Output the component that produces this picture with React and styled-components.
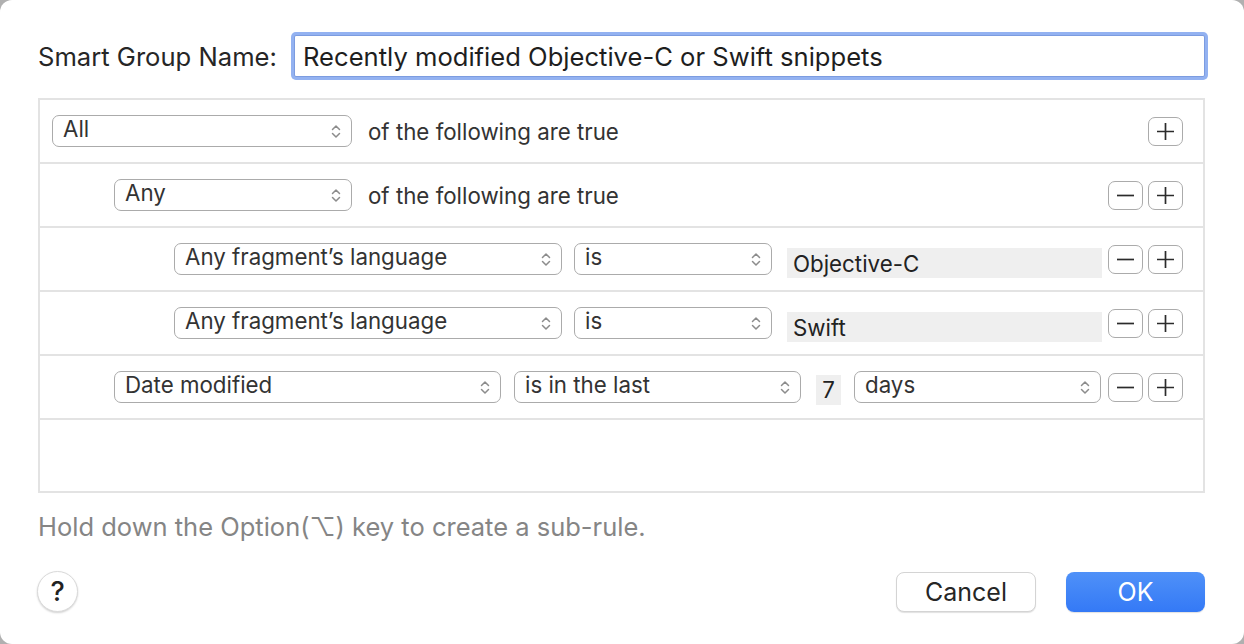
import React from 'react'
import styled, { createGlobalStyle } from 'styled-components'

const GlobalStyle = createGlobalStyle`
  html, body {
    margin: 0;
    padding: 0;
    background: #b0b0b0;
  }
  body {
    font-family: Inter, "Liberation Sans", "DejaVu Sans", sans-serif;
    -webkit-font-smoothing: antialiased;
  }
`

const Chevrons = () => (
  <svg width="10" height="17" viewBox="0 0 10 17" fill="none">
    <path d="M1.5 6.5 L5 3 L8.5 6.5" stroke="#8c8c8c" strokeWidth="1.5" strokeLinecap="round" strokeLinejoin="round" />
    <path d="M1.5 10.5 L5 14 L8.5 10.5" stroke="#8c8c8c" strokeWidth="1.5" strokeLinecap="round" strokeLinejoin="round" />
  </svg>
)

const PlusIcon = () => (
  <svg width="19" height="19" viewBox="0 0 19 19">
    <path d="M9.5 1 V18 M1 9.5 H18" stroke="#2b2b2b" strokeWidth="1.7" />
  </svg>
)

const MinusIcon = () => (
  <svg width="19" height="19" viewBox="0 0 19 19">
    <path d="M1 9.5 H18" stroke="#2b2b2b" strokeWidth="1.7" />
  </svg>
)

function PopUp({ w, gap, children }) {
  return (
    <Popup w={w} gap={gap}>
      <span>{children}</span>
      <Chevrons />
    </Popup>
  )
}

function Steppers({ minus = true }) {
  return (
    <StepGroup>
      {minus && <StepButton><MinusIcon /></StepButton>}
      <StepButton><PlusIcon /></StepButton>
    </StepGroup>
  )
}

export default function App() {
  return (
    <>
      <GlobalStyle />
      <Sheet>
        <NameRow>
          <NameLabel>Smart Group Name:</NameLabel>
          <NameInput>Recently modified Objective-C or Swift snippets</NameInput>
        </NameRow>

        <Rules>
          <Row indent={12}>
            <PopUp w={300} gap={16}>All</PopUp>
            <RuleText>of the following are true</RuleText>
            <Steppers minus={false} />
          </Row>
          <Row indent={74}>
            <PopUp w={238} gap={16}>Any</PopUp>
            <RuleText>of the following are true</RuleText>
            <Steppers />
          </Row>
          <Row indent={134}>
            <PopUp w={388}>Any fragment’s language</PopUp>
            <PopUp w={198} gap={15}>is</PopUp>
            <ValueField w={315} drop={8}>Objective-C</ValueField>
            <Steppers />
          </Row>
          <Row indent={134}>
            <PopUp w={388}>Any fragment’s language</PopUp>
            <PopUp w={198} gap={15}>is</PopUp>
            <ValueField w={315} drop={8}>Swift</ValueField>
            <Steppers />
          </Row>
          <Row indent={74}>
            <PopUp w={387} gap={13}>Date modified</PopUp>
            <PopUp w={287} gap={15}>is in the last</PopUp>
            <ValueField w={25} drop={5} center gap={13}>7</ValueField>
            <PopUp w={247} gap={0}>days</PopUp>
            <Steppers />
          </Row>
          <EmptyRow />
        </Rules>

        <Hint>Hold down the Option(⌥) key to create a sub-rule.</Hint>

        <Footer>
          <HelpButton>?</HelpButton>
          <CancelButton>Cancel</CancelButton>
          <OkButton>OK</OkButton>
        </Footer>
      </Sheet>
    </>
  )
}

const Sheet = styled.div`
  width: 1244px;
  height: 644px;
  box-sizing: border-box;
  background: #ffffff;
  border-radius: 12px;
  padding: 35px 39px 0 38px;
  display: flex;
  flex-direction: column;
`

const NameRow = styled.div`
  display: flex;
  align-items: center;
  height: 42px;
`

const NameLabel = styled.label`
  width: 256px;
  flex-shrink: 0;
  font-size: 25.6px;
  color: #262626;
`

const NameInput = styled.div`
  flex: 1;
  height: 42px;
  box-sizing: border-box;
  border: 1px solid #7c9ce0;
  box-shadow: 0 0 0 3px #93b2f1;
  border-radius: 2px;
  background: #fff;
  padding-left: 8px;
  display: flex;
  align-items: center;
  font-size: 25.6px;
  color: #1e1e1e;
`

const Rules = styled.div`
  margin-top: 21px;
  height: 395px;
  box-sizing: border-box;
  border: 2px solid #e3e3e3;
  display: flex;
  flex-direction: column;
`

const Row = styled.div`
  height: 62px;
  flex-shrink: 0;
  border-bottom: 2px solid #e3e3e3;
  display: flex;
  align-items: center;
  padding-left: ${p => p.indent}px;
  padding-right: 20px;
`

const EmptyRow = styled.div`
  flex: 1;
`

const Popup = styled.div`
  width: ${p => p.w}px;
  height: 32px;
  flex-shrink: 0;
  box-sizing: border-box;
  border: 1.5px solid #ababab;
  border-radius: 7px;
  background: #fff;
  display: flex;
  align-items: center;
  justify-content: space-between;
  padding: 0 10px 0 10px;
  margin-right: ${p => (p.gap ?? 12)}px;
  font-size: 22.3px;
  color: #333;
  line-height: 1;

  > span {
    margin-top: -3px;
  }
`

const RuleText = styled.span`
  font-size: 22.3px;
  color: #333;
`

const ValueField = styled.div`
  width: ${p => p.w}px;
  height: 30px;
  flex-shrink: 0;
  box-sizing: border-box;
  background: #efefef;
  margin-top: ${p => p.drop}px;
  margin-right: ${p => p.gap ?? 0}px;
  padding-left: ${p => (p.center ? 0 : 6)}px;
  display: flex;
  align-items: center;
  justify-content: ${p => (p.center ? 'center' : 'flex-start')};
  font-size: 22.3px;
  color: #222;
`

const StepGroup = styled.div`
  margin-left: auto;
  display: flex;
  gap: 5px;
`

const StepButton = styled.div`
  width: 35px;
  height: 29px;
  box-sizing: border-box;
  border: 1.5px solid #ababab;
  border-radius: 7px;
  background: #fff;
  display: flex;
  align-items: center;
  justify-content: center;
`

const Hint = styled.div`
  margin-top: 18px;
  font-size: 25.5px;
  line-height: 31px;
  color: #858585;
`

const Footer = styled.div`
  margin-top: 29px;
  display: flex;
  align-items: center;
`

const HelpButton = styled.div`
  width: 41px;
  height: 41px;
  margin-left: -1px;
  box-sizing: border-box;
  border-radius: 50%;
  border: 1px solid #dadada;
  box-shadow: 0 1px 2px rgba(0, 0, 0, 0.18);
  background: #fff;
  display: flex;
  align-items: center;
  justify-content: center;
  font-size: 27px;
  font-weight: 500;
  color: #222;
`

const CancelButton = styled.div`
  margin-left: auto;
  margin-right: 30px;
  width: 140px;
  height: 40px;
  box-sizing: border-box;
  border-radius: 8px;
  border: 1px solid #d4d4d4;
  box-shadow: 0 1px 1px rgba(0, 0, 0, 0.12);
  background: #fff;
  display: flex;
  align-items: center;
  justify-content: center;
  font-size: 25px;
  color: #262626;
`

const OkButton = styled.div`
  width: 139px;
  height: 40px;
  border-radius: 8px;
  background: linear-gradient(#4f91f8, #3479f6);
  box-shadow: 0 1px 1px rgba(0, 0, 0, 0.12);
  display: flex;
  align-items: center;
  justify-content: center;
  font-size: 25px;
  color: #fff;
`
